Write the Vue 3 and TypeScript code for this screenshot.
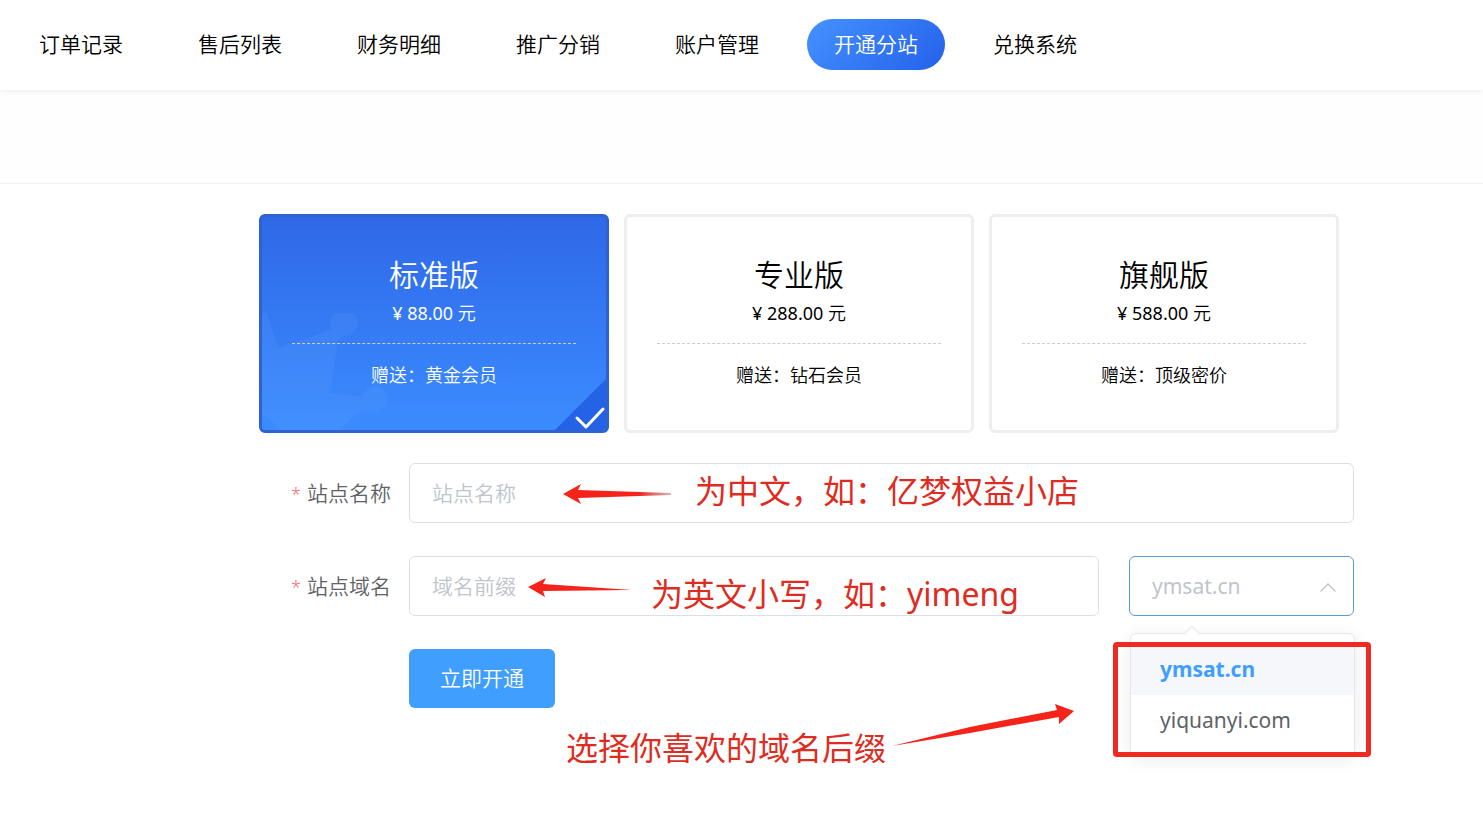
<script setup lang="ts">
import { ref } from 'vue'

interface Plan {
  id: string
  name: string
  price: string
  gift: string
}

const navItems: string[] = ['订单记录', '售后列表', '财务明细', '推广分销', '账户管理', '开通分站', '兑换系统']
const activeNav = ref('开通分站')

const plans: Plan[] = [
  { id: 'standard', name: '标准版', price: '88.00', gift: '黄金会员' },
  { id: 'pro', name: '专业版', price: '288.00', gift: '钻石会员' },
  { id: 'flagship', name: '旗舰版', price: '588.00', gift: '顶级密价' },
]
const selectedPlan = ref('standard')

const suffixes: string[] = ['ymsat.cn', 'yiquanyi.com']
const suffix = ref('ymsat.cn')
const menuOpen = ref(true)

const siteName = ref('')
const prefix = ref('')

function choose(value: string): void {
  suffix.value = value
  menuOpen.value = false
}
</script>

<template>
  <div class="page">
    <header class="topbar">
      <nav class="nav">
        <a
          v-for="item in navItems"
          :key="item"
          href="#"
          class="nav-link"
          :class="{ active: item === activeNav }"
          @click.prevent="activeNav = item"
        >{{ item }}</a>
      </nav>
    </header>
    <div class="subbar"></div>

    <main class="content">
      <div class="plans" role="radiogroup" aria-label="版本">
        <label
          v-for="plan in plans"
          :key="plan.id"
          class="plan"
          :class="{ selected: plan.id === selectedPlan }"
        >
          <input v-model="selectedPlan" class="plan-radio" type="radio" name="plan" :value="plan.id" />
          <svg v-if="plan.id === selectedPlan" class="crown" viewBox="0 0 130 117" aria-hidden="true">
            <path
              d="M0 0H5L16 35L53 23L70 16A13 13 0 0 1 72 0H92A13 13 0 0 1 84 22L76 27L68 80L100 84A13 13 0 1 1 108 98L93 102L77 117H20L0 101Z"
              fill="#6aa6ff"
              fill-opacity="0.15"
            />
          </svg>
          <span class="plan-name">{{ plan.name }}</span>
          <span class="plan-price"><span class="amount">¥ {{ plan.price }}</span> 元</span>
          <span class="plan-rule"></span>
          <span class="plan-gift">赠送：{{ plan.gift }}</span>
          <svg v-if="plan.id === selectedPlan" class="tick" viewBox="0 0 57 57" aria-hidden="true">
            <path d="M57 0V57H0Z" fill="#2563e6" />
            <path d="M25 42L34 51L51 33" fill="none" stroke="#fff" stroke-width="3" stroke-linecap="round" stroke-linejoin="round" />
          </svg>
        </label>
      </div>

      <form class="form" @submit.prevent>
        <div class="row">
          <label class="row-label" for="site-name"><span class="star">*</span>站点名称</label>
          <div class="row-field">
            <input id="site-name" v-model="siteName" class="control" type="text" placeholder="站点名称" />
            <div class="note note-name">
              <svg class="arrow" viewBox="0 0 108 22" aria-hidden="true">
                <defs>
                  <linearGradient id="fade-a" x1="0" x2="1">
                    <stop offset="0.7" stop-color="#f5231a" />
                    <stop offset="1" stop-color="#b0413c" stop-opacity="0.4" />
                  </linearGradient>
                </defs>
                <path d="M0 11L18 1L15 7L108 10V12L15 15L18 21Z" fill="url(#fade-a)" />
              </svg>
              <span>为中文，如：亿梦权益小店</span>
            </div>
          </div>
        </div>

        <div class="row">
          <label class="row-label" for="site-prefix"><span class="star">*</span>站点域名</label>
          <div class="row-field">
            <input id="site-prefix" v-model="prefix" class="control" type="text" placeholder="域名前缀" />
            <div class="note note-prefix">
              <svg class="arrow" viewBox="0 0 108 22" aria-hidden="true">
                <path d="M0 9L18 0L15 6L104 12L15 13L17 19Z" fill="#f5231a" />
              </svg>
              <span>为英文小写，如：yimeng</span>
            </div>
          </div>
          <div class="suffix">
            <select
              v-model="suffix"
              class="control suffix-select"
              aria-label="域名后缀"
              @mousedown.prevent="menuOpen = !menuOpen"
            >
              <option v-for="item in suffixes" :key="item" :value="item">{{ item }}</option>
            </select>
            <svg class="chevron" viewBox="0 0 18 10" aria-hidden="true">
              <path d="M2 9L9 2L16 9" fill="none" stroke="#c0c4cc" stroke-width="1.4" stroke-linecap="round" />
            </svg>
            <div v-if="menuOpen" class="menu">
              <button
                v-for="item in suffixes"
                :key="item"
                type="button"
                class="menu-item"
                :class="{ current: item === suffix }"
                @click="choose(item)"
              >{{ item }}</button>
            </div>
            <div class="frame"></div>
            <div class="note note-suffix">
              <span>选择你喜欢的域名后缀</span>
              <svg class="arrow-long" viewBox="0 0 184 44" aria-hidden="true">
                <path d="M2 42L80 23L167 6L165 0L184 7L169 20L169 13L80 29Z" fill="#f5231a" />
              </svg>
            </div>
          </div>
        </div>

        <button class="submit" type="submit">立即开通</button>
      </form>
    </main>
  </div>
</template>

<style>
body {
  margin: 0;
  background: #fff;
}
</style>

<style scoped>
.page,
.page * {
  box-sizing: border-box;
}

.page {
  font-family: "Noto Sans", "Noto Sans CJK SC", sans-serif;
  font-size: 21px;
  font-weight: 350;
  color: #000;
  overflow: hidden;
  min-height: 100vh;
}

.topbar {
  position: relative;
  height: 90px;
  padding: 0 12px 2px;
  display: flex;
  align-items: center;
  box-shadow: 0 1px 6px rgba(0, 0, 0, 0.08);
}

.nav {
  display: flex;
  gap: 21px;
}

.nav-link {
  padding: 0 27px;
  line-height: 51px;
  border-radius: 26px;
  color: #000;
  text-decoration: none;
  white-space: nowrap;
}

.nav-link.active {
  color: #fff;
  background: linear-gradient(135deg, #4592ff, #2461ea);
}

.subbar {
  height: 94px;
  background: #fefefe;
  border-bottom: 1px solid #f2f2f2;
}

.content {
  padding: 30px 129px 60px 259px;
}

.plans {
  display: grid;
  grid-template-columns: repeat(3, 1fr);
  gap: 15px;
  padding-right: 15px;
}

.plan {
  position: relative;
  display: flex;
  flex-direction: column;
  align-items: center;
  height: 219px;
  padding: 36px 30px 0;
  border: 3px solid #eee;
  border-radius: 6px;
  overflow: hidden;
  cursor: pointer;
}

.plan.selected {
  color: #fff;
  border-color: #2e62d0;
  background: linear-gradient(180deg, #2f68e8, #3b8cff);
}

.plan-radio {
  position: absolute;
  opacity: 0;
  margin: 0;
}

.plan-name {
  position: relative;
  font-size: 30px;
  line-height: 44px;
}

.plan-price {
  position: relative;
  font-size: 18px;
  line-height: 32px;
}

.amount {
  font-weight: 400;
}

.plan-rule {
  position: relative;
  align-self: stretch;
  margin: 14px 0 16px;
  border-top: 1px dashed #ccc;
}

.plan-gift {
  position: relative;
  font-size: 18px;
  line-height: 30px;
}

.crown {
  position: absolute;
  left: 0;
  bottom: 0;
  width: 130px;
  height: 117px;
}

.tick {
  position: absolute;
  right: -3px;
  bottom: -3px;
  width: 57px;
  height: 57px;
}

.form {
  display: flex;
  flex-direction: column;
  align-items: flex-start;
  gap: 33px;
  padding-top: 30px;
}

.row {
  display: flex;
  align-self: stretch;
}

.row-label {
  width: 150px;
  padding-right: 18px;
  line-height: 60px;
  text-align: right;
  white-space: nowrap;
  color: #606266;
}

.star {
  margin-right: 6px;
  font-size: 18px;
  line-height: 1;
  color: #f56c6c;
}

.row-field {
  position: relative;
  flex: 1;
}

.control {
  display: block;
  width: 100%;
  height: 60px;
  margin: 0;
  padding: 0 22px;
  border: 1px solid #dcdfe6;
  border-radius: 6px;
  outline: 0;
  background: #fff;
  color: #606266;
  font: inherit;
}

.control::placeholder {
  color: #c0c4cc;
  opacity: 1;
}

.suffix {
  position: relative;
  width: 225px;
  margin-left: 30px;
}

.suffix-select {
  appearance: none;
  border-color: #5a9bd0;
  color: #c0c4cc;
  font-weight: 400;
}

.chevron {
  position: absolute;
  right: 17px;
  top: 26px;
  width: 18px;
  height: 10px;
  pointer-events: none;
}

.menu {
  position: absolute;
  top: 77px;
  left: 1px;
  width: 100%;
  padding: 10px 0;
  border: 1px solid #e4e7ed;
  border-radius: 6px;
  background: #fff;
  box-shadow: 0 3px 18px rgba(0, 0, 0, 0.08);
}

.menu::before {
  content: "";
  position: absolute;
  top: -6px;
  left: 55px;
  width: 11px;
  height: 11px;
  border: solid #e4e7ed;
  border-width: 1px 0 0 1px;
  background: #fff;
  transform: rotate(45deg);
}

.menu-item {
  display: block;
  width: 100%;
  padding: 0 29px;
  border: 0;
  background: #fff;
  color: #606266;
  font: inherit;
  font-weight: 400;
  line-height: 51px;
  text-align: left;
  cursor: pointer;
}

.menu-item.current {
  background: #f5f7fa;
  color: #409eff;
  font-weight: 700;
}

.frame {
  position: absolute;
  top: 86px;
  left: -16px;
  width: 258px;
  height: 115px;
  border: 5px solid #ee2a22;
  border-radius: 4px;
  pointer-events: none;
}

.note {
  position: absolute;
  display: flex;
  align-items: center;
  font-size: 32px;
  font-weight: 400;
  line-height: 44px;
  color: #dd2c22;
  white-space: nowrap;
  pointer-events: none;
}

.note-name {
  top: 6px;
  left: 154px;
  gap: 24px;
}

.note-name .arrow {
  margin-top: 6px;
}

.note-prefix {
  top: 16px;
  left: 119px;
  gap: 15px;
}

.note-prefix .arrow {
  margin-bottom: 10px;
}

.note-suffix {
  top: 148px;
  right: 280px;
  align-items: flex-end;
  gap: 4px;
}

.arrow {
  width: 108px;
  height: 22px;
}

.arrow-long {
  width: 184px;
  height: 44px;
  margin-bottom: 22px;
}

.submit {
  margin-left: 150px;
  padding: 0 31px;
  border: 0;
  border-radius: 6px;
  background: #409eff;
  color: #fff;
  font: inherit;
  line-height: 59px;
  cursor: pointer;
}
</style>
